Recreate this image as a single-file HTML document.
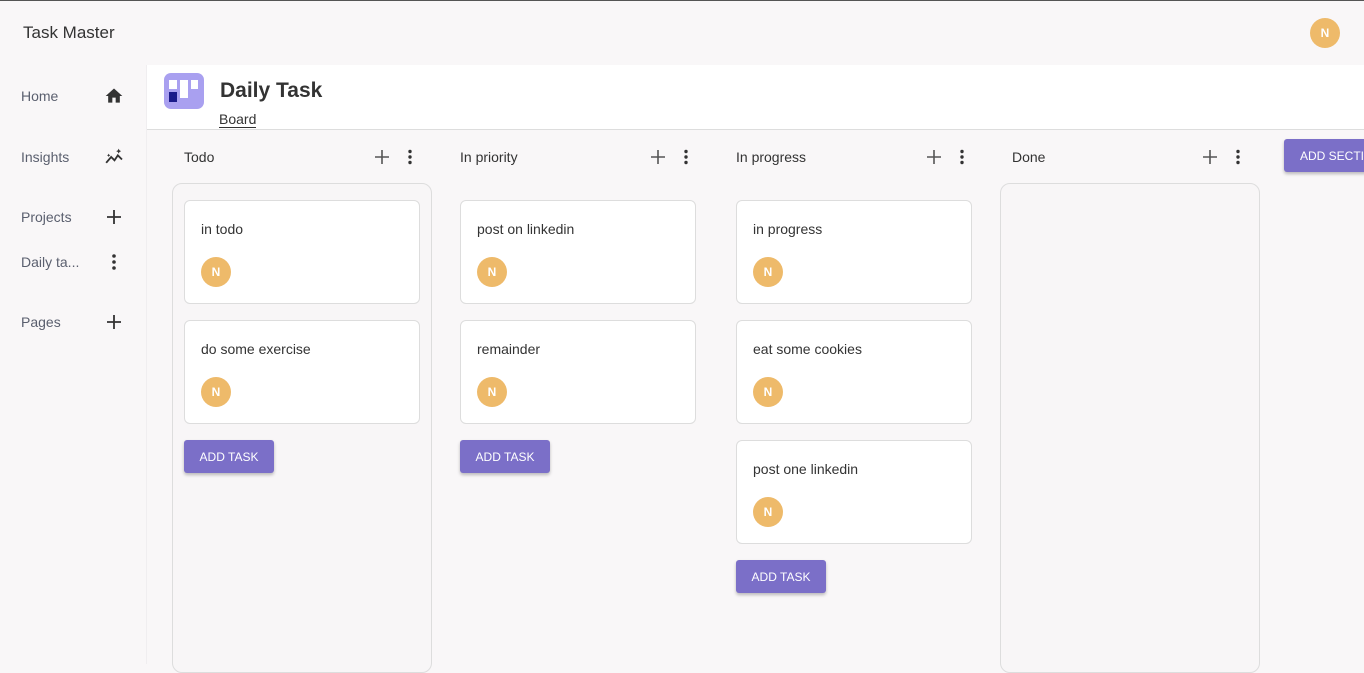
<!DOCTYPE html>
<html><head><style>
*{box-sizing:border-box;margin:0;padding:0}
body{width:1364px;height:664px;overflow:hidden;background:#f9f7f8;font-family:"Liberation Sans",sans-serif;color:#333;position:relative}
.a{position:absolute}
.top{left:0;top:0;width:1364px;height:1px;background:#555}
.side{font-size:14px;color:#5a5f6e}
.main{left:147px;top:65px;width:1217px;height:65px;background:#fff;border-bottom:1px solid #ddd}
.col{width:260px;top:183px;height:490px;border:1px solid #ddd;border-radius:10px;background:#f8f6f7}
.card{width:236px;height:104px;background:#fff;border:1px solid #ddd;border-radius:6px}
.card span{position:absolute;left:16px;top:20px;font-size:14px;color:#333}
.av{width:30px;height:30px;border-radius:50%;background:#eeba6a;color:#fff;font-size:12px;font-weight:bold;text-align:center;line-height:30px}
.card .av{position:absolute;left:16px;top:56px}
.btn{width:90px;height:33px;background:#7b6fc8;color:#fff;font-size:12px;text-align:center;line-height:34px;border-radius:3px;box-shadow:0 2px 3px rgba(0,0,0,.25)}
.hd{font-size:14px;color:#333}
</style></head><body>
<div class="a top"></div>
<div class="a" style="left:23px;top:23px;font-size:17px;color:#333">Task Master</div>
<div class="a av" style="left:1310px;top:18px">N</div>
<div class="a" style="left:146px;top:65px;width:1px;height:599px;background:#f0eef0"></div>
<div class="a side" style="left:21px;top:88px">Home</div>
<svg class="a" style="left:104px;top:86px" width="20" height="20" viewBox="0 0 24 24"><path d="M10 20v-6h4v6h5v-8h3L12 3 2 12h3v8z" fill="#333"/></svg>
<div class="a side" style="left:21px;top:149px">Insights</div>
<svg class="a" style="left:104px;top:147px" width="21" height="20" viewBox="0 0 24 24"><path d="M2 19l6-7 4 4 4-6 5 5" stroke="#333" stroke-width="2.2" fill="none"/><path d="M17 2l1 2 2 1-2 1-1 2-1-2-2-1 2-1zM5 8l.7 1.3L7 10l-1.3.7L5 12l-.7-1.3L3 10l1.3-.7z" fill="#333"/></svg>
<div class="a side" style="left:21px;top:209px">Projects</div>
<svg class="a" style="left:107px;top:210px" width="14" height="14"><path d="M7 0v14M0 7h14" stroke="#333" stroke-width="1.8"/></svg>
<div class="a side" style="left:21px;top:254px">Daily ta...</div>
<svg class="a" style="left:110px;top:253px" width="8" height="18"><circle cx="4" cy="3" r="1.8" fill="#333"/><circle cx="4" cy="9" r="1.8" fill="#333"/><circle cx="4" cy="15" r="1.8" fill="#333"/></svg>
<div class="a side" style="left:21px;top:314px">Pages</div>
<svg class="a" style="left:107px;top:315px" width="14" height="14"><path d="M7 0v14M0 7h14" stroke="#333" stroke-width="1.8"/></svg>

<div class="a main"></div>
<div class="a" style="left:164px;top:73px;width:40px;height:36px;border-radius:7px;background:#a9a0f0"></div>
<div class="a" style="left:169px;top:80px;width:8px;height:9px;background:#fff"></div>
<div class="a" style="left:169px;top:92px;width:8px;height:10px;background:#1a1a8a"></div>
<div class="a" style="left:180px;top:80px;width:8px;height:18px;background:#fff"></div>
<div class="a" style="left:191px;top:80px;width:7px;height:9px;background:#fff"></div>
<div class="a" style="left:220px;top:79px;font-size:21px;font-weight:bold;color:#333">Daily Task</div>
<div class="a" style="left:219px;top:111px;font-size:14px;color:#333;border-bottom:1px solid #333;line-height:16px">Board</div>

<div class="a col" style="left:172px"></div>
<div class="a col" style="left:1000px"></div>

<div class="a hd" style="left:184px;top:149px">Todo</div>
<div class="a hd" style="left:460px;top:149px">In priority</div>
<div class="a hd" style="left:736px;top:149px">In progress</div>
<div class="a hd" style="left:1012px;top:149px">Done</div>

<svg class="a" style="left:375px;top:150px" width="14" height="14"><path d="M7 0v14M0 7h14" stroke="#555" stroke-width="1.6"/></svg>
<svg class="a" style="left:651px;top:150px" width="14" height="14"><path d="M7 0v14M0 7h14" stroke="#555" stroke-width="1.6"/></svg>
<svg class="a" style="left:927px;top:150px" width="14" height="14"><path d="M7 0v14M0 7h14" stroke="#555" stroke-width="1.6"/></svg>
<svg class="a" style="left:1203px;top:150px" width="14" height="14"><path d="M7 0v14M0 7h14" stroke="#555" stroke-width="1.6"/></svg>
<svg class="a" style="left:406px;top:149px" width="8" height="16"><circle cx="4" cy="2.5" r="1.7" fill="#333"/><circle cx="4" cy="8" r="1.7" fill="#333"/><circle cx="4" cy="13.5" r="1.7" fill="#333"/></svg>
<svg class="a" style="left:682px;top:149px" width="8" height="16"><circle cx="4" cy="2.5" r="1.7" fill="#333"/><circle cx="4" cy="8" r="1.7" fill="#333"/><circle cx="4" cy="13.5" r="1.7" fill="#333"/></svg>
<svg class="a" style="left:958px;top:149px" width="8" height="16"><circle cx="4" cy="2.5" r="1.7" fill="#333"/><circle cx="4" cy="8" r="1.7" fill="#333"/><circle cx="4" cy="13.5" r="1.7" fill="#333"/></svg>
<svg class="a" style="left:1234px;top:149px" width="8" height="16"><circle cx="4" cy="2.5" r="1.7" fill="#333"/><circle cx="4" cy="8" r="1.7" fill="#333"/><circle cx="4" cy="13.5" r="1.7" fill="#333"/></svg>

<div class="a card" style="left:184px;top:200px"><span>in todo</span><div class="av">N</div></div>
<div class="a card" style="left:184px;top:320px"><span>do some exercise</span><div class="av">N</div></div>
<div class="a btn" style="left:184px;top:440px">ADD TASK</div>

<div class="a card" style="left:460px;top:200px"><span>post on linkedin</span><div class="av">N</div></div>
<div class="a card" style="left:460px;top:320px"><span>remainder</span><div class="av">N</div></div>
<div class="a btn" style="left:460px;top:440px">ADD TASK</div>

<div class="a card" style="left:736px;top:200px"><span>in progress</span><div class="av">N</div></div>
<div class="a card" style="left:736px;top:320px"><span>eat some cookies</span><div class="av">N</div></div>
<div class="a card" style="left:736px;top:440px"><span>post one linkedin</span><div class="av">N</div></div>
<div class="a btn" style="left:736px;top:560px">ADD TASK</div>

<div class="a btn" style="left:1284px;top:139px;width:110px;text-align:left;padding-left:16px;white-space:nowrap">ADD SECTION</div>
</body></html>
